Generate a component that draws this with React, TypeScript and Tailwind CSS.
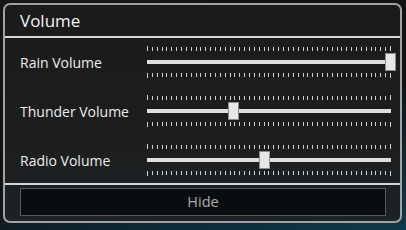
const ticks = Array.from({ length: 51 }, (_, i) => i);

function TickRow({ top }: { top: boolean }) {
  return (
    <div className={`flex h-[5px] w-[244px] justify-between ${top ? "items-end" : "items-start"}`}>
      {ticks.map((i) => (
        <span
          key={i}
          className={`w-px bg-[#cfcfcf] ${i === 0 || i === 50 ? "h-[5px]" : "h-[4px]"}`}
        />
      ))}
    </div>
  );
}

function VolumeSlider({ value }: { value: number }) {
  return (
    <div className="relative flex h-[34px] w-[249px] flex-col">
      <div className="mt-[1px]">
        <TickRow top />
      </div>
      <div className="mt-[9px] h-[4px] w-[244px] bg-[#dedede]" />
      <div className="mt-[9px]">
        <TickRow top={false} />
      </div>
      {/* thumb sits over the track */}
      <div
        className="absolute top-[8px] h-[18px] w-[11px] border border-[#8c8c8c] bg-[#e6e6e6]"
        style={{ left: `${(value / 100) * 238}px` }}
      />
    </div>
  );
}

function Row({ label, value }: { label: string; value: number }) {
  return (
    <div className="flex h-[46px] items-center">
      <span className="w-[142px] pl-[15px] text-[14px] text-[#ececec]">{label}</span>
      <VolumeSlider value={value} />
    </div>
  );
}

export default function App() {
  return (
    <div
      className="h-[230px] w-[406px] overflow-hidden bg-[linear-gradient(165deg,#171717_0%,#111111_55%,#0d2a36_80%,#0f3a4b_100%)] pl-[3px] pt-[3px]"
      style={{ fontFamily: '"Open Sans", "Noto Sans", sans-serif' }}
    >
      <div className="flex h-[220px] w-[399px] flex-col rounded-[7px] border-2 border-[#a2a2a2] bg-[linear-gradient(180deg,#1b1b1b_0%,#1c1d1e_55%,#1e2225_100%)]">
        <div className="flex h-[31px] items-center pl-[15px] text-[17px] text-[#f2f2f2]">Volume</div>
        <div className="h-[2px] bg-[#d6d6d6]" />
        <div className="flex flex-col gap-[3px] pt-[1px]">
          <Row label="Rain Volume" value={100} />
          <Row label="Thunder Volume" value={34} />
          <Row label="Radio Volume" value={47} />
        </div>
        <div className="h-[2px] bg-[#d6d6d6]" />
        <button
          type="button"
          className="ml-[15px] mt-[3px] flex h-[28px] w-[366px] items-center justify-center border border-[#5a5a5a] bg-[#0a0d0f] text-[14.5px] text-[#ababab]"
        >
          Hide
        </button>
      </div>
    </div>
  );
}
